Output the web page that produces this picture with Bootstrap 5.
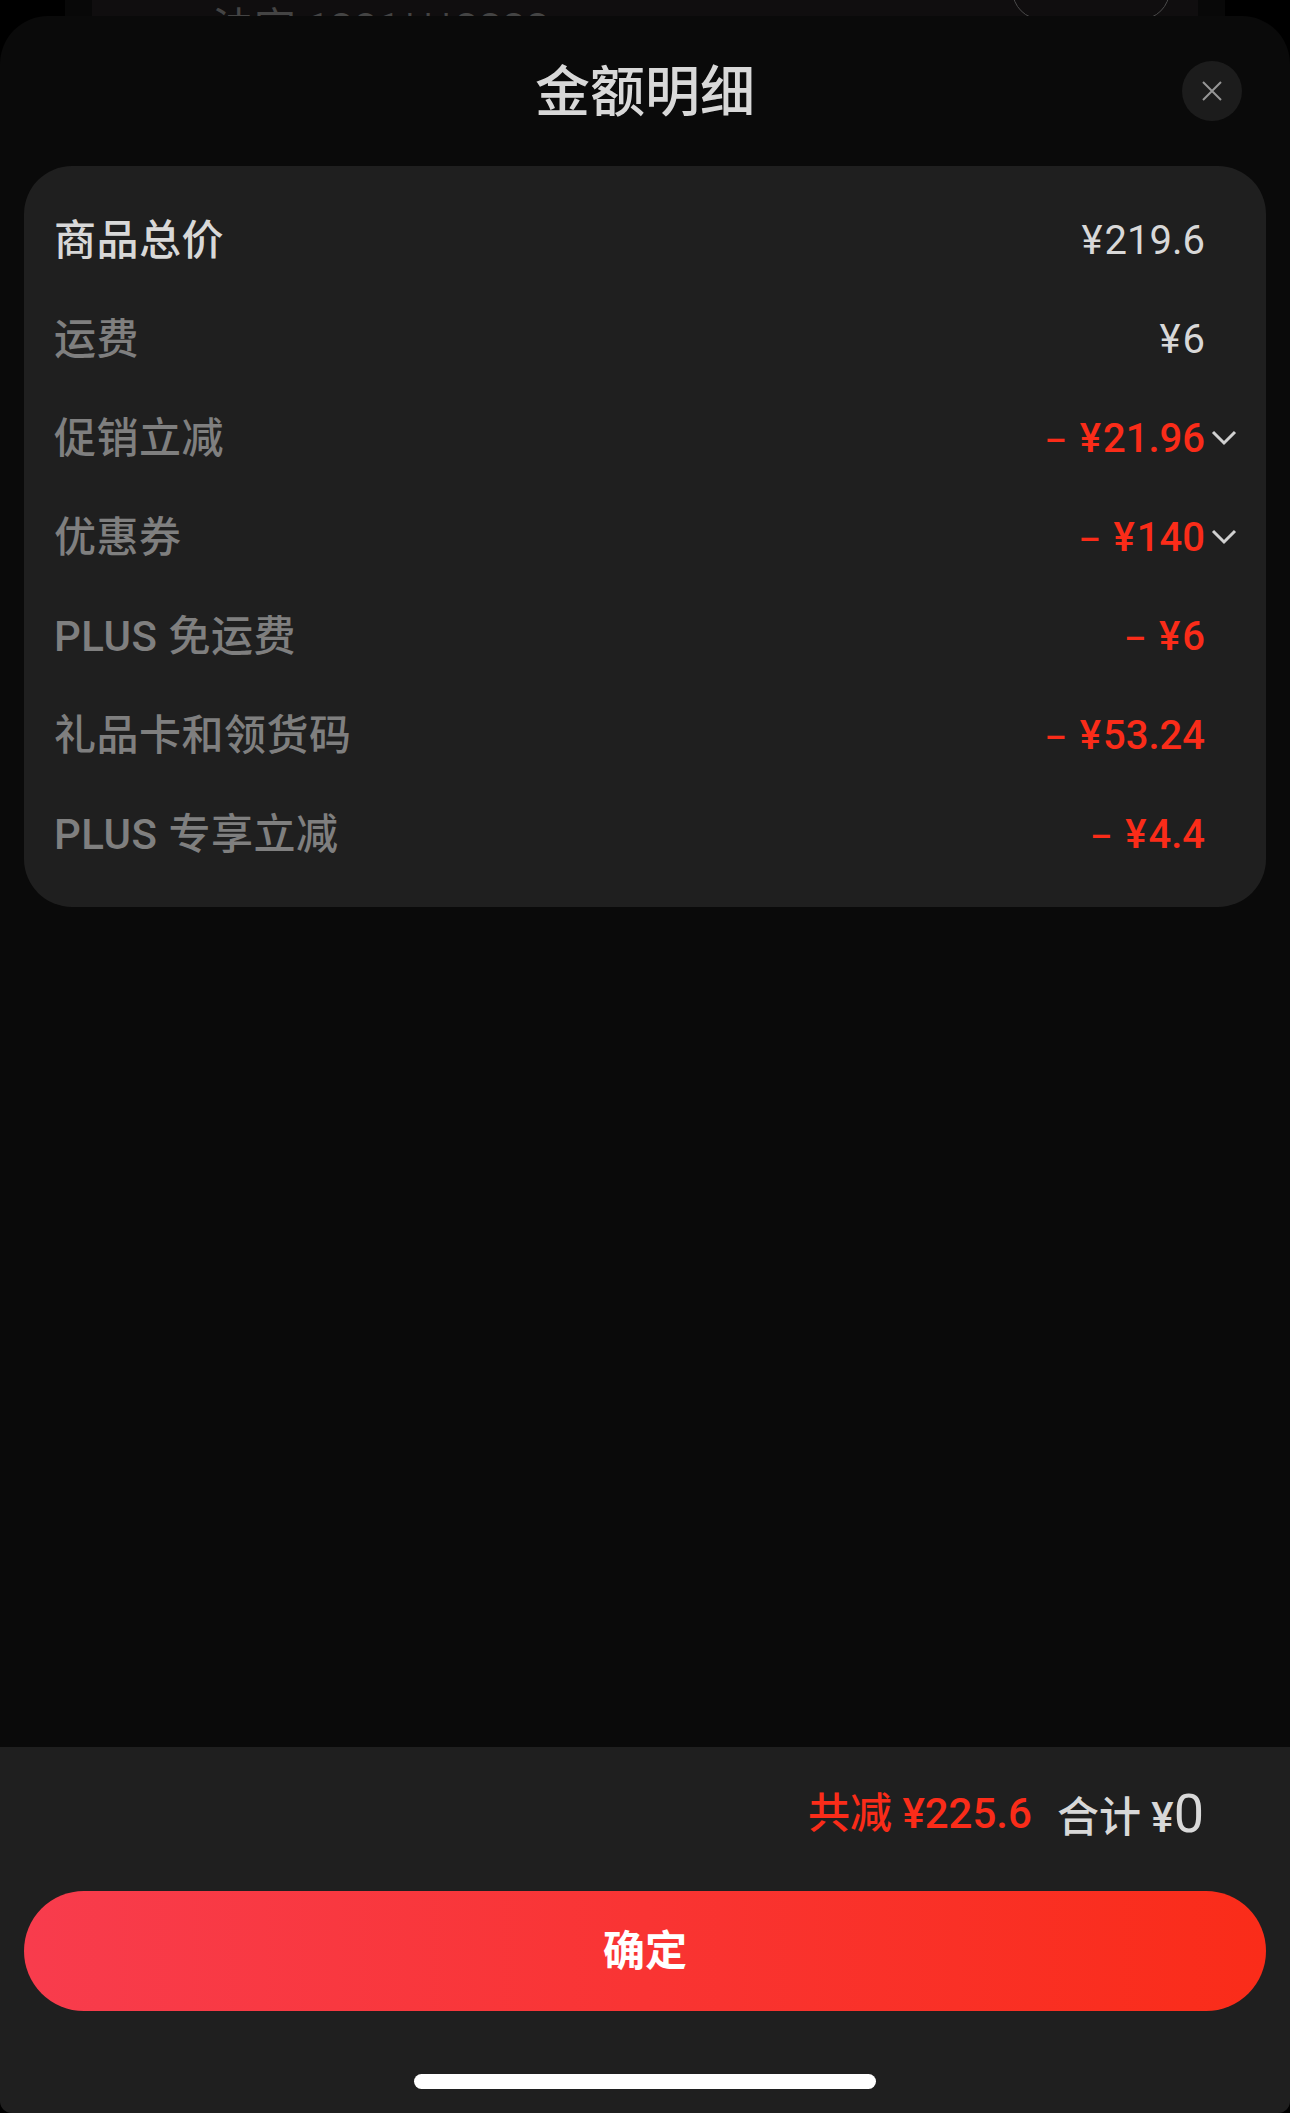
<!DOCTYPE html>
<html lang="zh-CN">
<head>
  <meta charset="UTF-8" />
  <meta name="viewport" content="width=device-width, initial-scale=1" />
  <title>金额明细</title>
  <link href="https://cdn.jsdelivr.net/npm/bootstrap@5.3.0/dist/css/bootstrap.min.css" rel="stylesheet" />
  <style>
    html, body { height: 100%; }
    body {
      background: #000;
      font-family: Roboto, "Noto Sans CJK SC", sans-serif;
      overflow: hidden;
    }
    .behind-outer { height: 16px; padding: 0 27px; margin: 0 65px; background: #080808; }
    .behind {
      height: 16px;
      background: #100e0f;
      overflow: hidden;
      position: relative;
    }
    .behind-text { position: absolute; left: 120px; top: 9px; font-size: 42px; line-height: 40px; color: #444; white-space: nowrap; }
    .behind-btn { position: absolute; right: 28px; top: -40px; width: 158px; height: 60px; border: 1px solid #4a4a4a; border-radius: 30px; }
    .sheet {
      height: 2097px;
      background: #0a0a0a;
      border-radius: 48px 48px 12px 12px;
    }
    .sheet-head { height: 150px; position: relative; }
    .sheet-title { font-size: 55px; font-weight: 500; color: #d8d8d8; line-height: 1; padding-top: 2px; }
    .close-btn {
      position: absolute; right: 48px; top: 45px;
      width: 60px; height: 60px; border: 0; padding: 0;
      border-radius: 50%; background: #1c1c1c;
    }
    .fee-card { background: #1f1f1f; border-radius: 48px; margin: 0 24px; padding: 25px 0 25px 30px; height: 741px; }
    .fee-row { height: 99px; padding-right: 61px; position: relative; font-size: 42px; font-weight: 500; color: #7f7f7f; letter-spacing: .5px; }
    .fee-label-main { color: #d8d8d8; }
    .fee-val { font-size: 40px; font-weight: 400; color: #d8d8d8; letter-spacing: 0; }
    .fee-val.minus { color: #fa2c19; font-weight: 500; }
    .yen { margin-right: 2px; }
    .dash { font-size: 34px; margin-right: 13px; }
    .chev { position: absolute; right: 29px; top: 41px; }
    .sheet-foot { background: #1f1f1f; height: 366px; border-radius: 0 0 12px 12px; padding: 0 24px; }
    .sum-row { height: 144px; padding: 0 62px 12px 0; font-size: 42px; font-weight: 500; color: #d8d8d8; }
    .sum-off { color: #fa2c19; margin-right: 25px; }
    .sum-zero { font-size: 54px; font-weight: 400; }
    .confirm-btn {
      width: 100%; height: 120px; border: 0; border-radius: 60px;
      background: linear-gradient(90deg, #f83c4d, #fa2c19);
      color: #fff; font-size: 42px; font-weight: 700;
    }
    .home-bar { width: 462px; height: 15px; background: #fff; border-radius: 8px; margin: 63px auto 0; }
  </style>
</head>
<body>
  <div class="behind-outer">
    <div class="behind">
      <div class="behind-text">法定 1381***3333</div>
      <div class="behind-btn"></div>
    </div>
  </div>
  <div class="sheet d-flex flex-column">
    <div class="sheet-head d-flex align-items-center justify-content-center">
      <div class="sheet-title">金额明细</div>
      <button class="close-btn d-flex align-items-center justify-content-center" type="button" aria-label="关闭">
        <svg width="20" height="20" viewBox="0 0 20 20"><path d="M1 1 19 19M19 1 1 19" stroke="#969696" stroke-width="2" fill="none"/></svg>
      </button>
    </div>

    <div class="fee-card">
      <div class="fee-row d-flex justify-content-between align-items-center">
        <span class="fee-label-main">商品总价</span><span class="fee-val"><span class="yen">¥</span>219.6</span>
      </div>
      <div class="fee-row d-flex justify-content-between align-items-center">
        <span>运费</span><span class="fee-val"><span class="yen">¥</span>6</span>
      </div>
      <div class="fee-row d-flex justify-content-between align-items-center">
        <span>促销立减</span><span class="fee-val minus"><span class="dash">–</span><span class="yen">¥</span>21.96</span>
        <svg class="chev" width="26" height="16" viewBox="0 0 26 16"><path d="M2 2 13 13 24 2" stroke="#d0d0d0" stroke-width="3" fill="none"/></svg>
      </div>
      <div class="fee-row d-flex justify-content-between align-items-center">
        <span>优惠券</span><span class="fee-val minus"><span class="dash">–</span><span class="yen">¥</span>140</span>
        <svg class="chev" width="26" height="16" viewBox="0 0 26 16"><path d="M2 2 13 13 24 2" stroke="#d0d0d0" stroke-width="3" fill="none"/></svg>
      </div>
      <div class="fee-row d-flex justify-content-between align-items-center">
        <span>PLUS 免运费</span><span class="fee-val minus"><span class="dash">–</span><span class="yen">¥</span>6</span>
      </div>
      <div class="fee-row d-flex justify-content-between align-items-center">
        <span>礼品卡和领货码</span><span class="fee-val minus"><span class="dash">–</span><span class="yen">¥</span>53.24</span>
      </div>
      <div class="fee-row d-flex justify-content-between align-items-center">
        <span>PLUS 专享立减</span><span class="fee-val minus"><span class="dash">–</span><span class="yen">¥</span>4.4</span>
      </div>
    </div>

    <div class="sheet-foot mt-auto">
      <div class="sum-row d-flex justify-content-end align-items-center">
        <span class="sum-off">共减 ¥225.6</span><span>合计 ¥<span class="sum-zero">0</span></span>
      </div>
      <button class="confirm-btn" type="button">确定</button>
      <div class="home-bar"></div>
    </div>
  </div>
  <script src="https://cdn.jsdelivr.net/npm/bootstrap@5.3.0/dist/js/bootstrap.bundle.min.js"></script>
</body>
</html>
